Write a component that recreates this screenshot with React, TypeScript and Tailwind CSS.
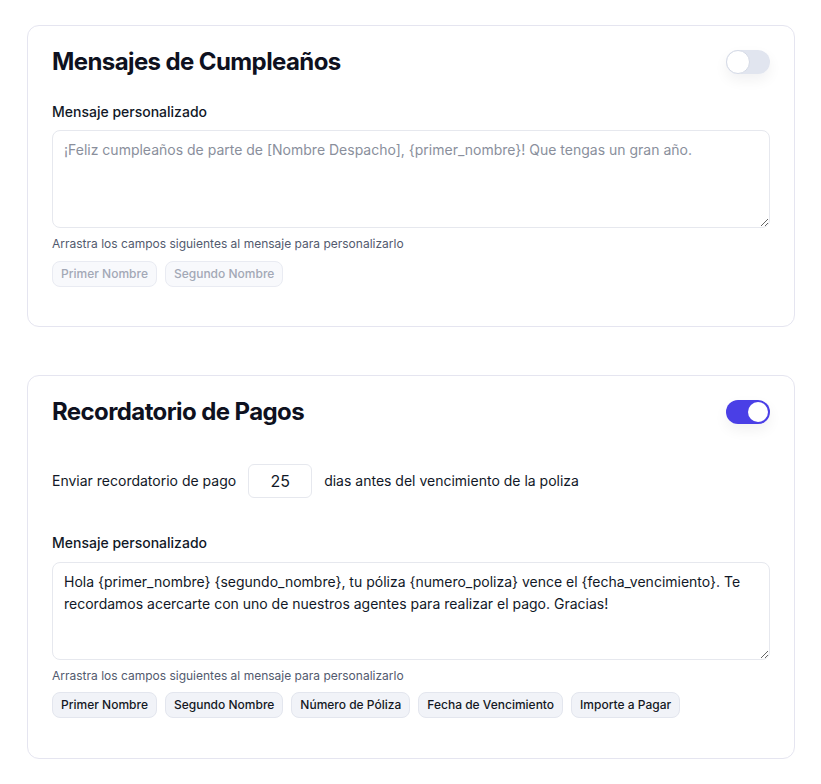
import React, { useState } from "react";

function Toggle({ on }: { on: boolean }) {
  return (
    <div className="shadow-[0_6px_14px_rgba(15,23,42,0.06)] rounded-full">
      {on ? (
        <div className="w-11 h-6 rounded-full bg-[#4a3fe6] flex items-center justify-end p-[2px]">
          <div className="w-5 h-5 rounded-full bg-white" />
        </div>
      ) : (
        <div className="w-11 h-6 rounded-full bg-[#e1e5ef] flex items-center justify-start">
          <div className="w-6 h-6 rounded-full bg-white border border-[#d5dae6]" />
        </div>
      )}
    </div>
  );
}

function Chip({ label, disabled }: { label: string; disabled?: boolean }) {
  return (
    <span
      className={
        disabled
          ? "inline-flex items-center h-[26px] px-2 rounded-lg border border-[#e9ebf2] bg-[#f8f9fc] text-xs font-medium text-[#a3a8b6]"
          : "inline-flex items-center h-[26px] px-2 rounded-lg border border-[#e3e6ee] bg-[#f1f3f8] text-xs font-medium text-[#141824]"
      }
    >
      {label}
    </span>
  );
}

export default function App() {
  const [msg1] = useState("");
  const [msg2, setMsg2] = useState(
    "Hola {primer_nombre} {segundo_nombre}, tu póliza {numero_poliza} vence el {fecha_vencimiento}. Te recordamos acercarte con uno de nuestros agentes para realizar el pago. Gracias!"
  );
  return (
    <div
      className="bg-white min-h-[784px] px-[27px] pt-[25px] pb-6 text-[#111827]"
      style={{ fontFamily: "Inter, 'Noto Sans', sans-serif" }}
    >
      <div className="w-[768px] rounded-xl border border-[#e5e5f0] bg-white px-6 pt-5 pb-[39px]">
        <div className="flex items-center justify-between h-8">
          <h2 className="text-2xl font-bold text-[#0e1120] tracking-[-0.025em]">Mensajes de Cumpleaños</h2>
          <Toggle on={false} />
        </div>
        <div className="mt-6 text-sm font-medium leading-5 text-[#111827]">Mensaje personalizado</div>
        <textarea
          className="mt-2 block w-full h-[98px] rounded-lg border border-[#e6e8ee] px-[11px] py-[8px] text-sm leading-[22px] text-[#111827] placeholder:text-[#8a8f9c] outline-none resize-y"
          placeholder="¡Feliz cumpleaños de parte de [Nombre Despacho], {primer_nombre}! Que tengas un gran año."
          value={msg1}
          readOnly
        />
        <div className="mt-2 text-xs leading-4 text-[#525a6e]">
          Arrastra los campos siguientes al mensaje para personalizarlo
        </div>
        <div className="mt-[9px] flex gap-2">
          <Chip label="Primer Nombre" disabled />
          <Chip label="Segundo Nombre" disabled />
        </div>
      </div>

      <div className="mt-12 w-[768px] rounded-xl border border-[#e5e5f0] bg-white px-6 pt-5 pb-10">
        <div className="flex items-center justify-between h-8">
          <h2 className="text-2xl font-bold text-[#0e1120] tracking-[-0.025em]">Recordatorio de Pagos</h2>
          <Toggle on={true} />
        </div>
        <div className="mt-[36px] flex items-center gap-3 text-sm text-[#111827]">
          <span>Enviar recordatorio de pago</span>
          <input
            className="w-16 h-[34px] rounded-md border border-[#e6e8ee] text-center text-base text-[#111827] outline-none"
            value="25"
            readOnly
          />
          <span>dias antes del vencimiento de la poliza</span>
        </div>
        <div className="mt-[35px] text-sm font-medium leading-5 text-[#111827]">Mensaje personalizado</div>
        <textarea
          className="mt-[9px] block w-full h-[98px] rounded-lg border border-[#e6e8ee] px-[11px] py-[8px] text-sm leading-[22px] text-[#111827] outline-none resize-y"
          value={msg2}
          onChange={(e) => setMsg2(e.target.value)}
        />
        <div className="mt-[8px] text-xs leading-4 text-[#525a6e]">
          Arrastra los campos siguientes al mensaje para personalizarlo
        </div>
        <div className="mt-2 flex gap-2">
          <Chip label="Primer Nombre" />
          <Chip label="Segundo Nombre" />
          <Chip label="Número de Póliza" />
          <Chip label="Fecha de Vencimiento" />
          <Chip label="Importe a Pagar" />
        </div>
      </div>
    </div>
  );
}
